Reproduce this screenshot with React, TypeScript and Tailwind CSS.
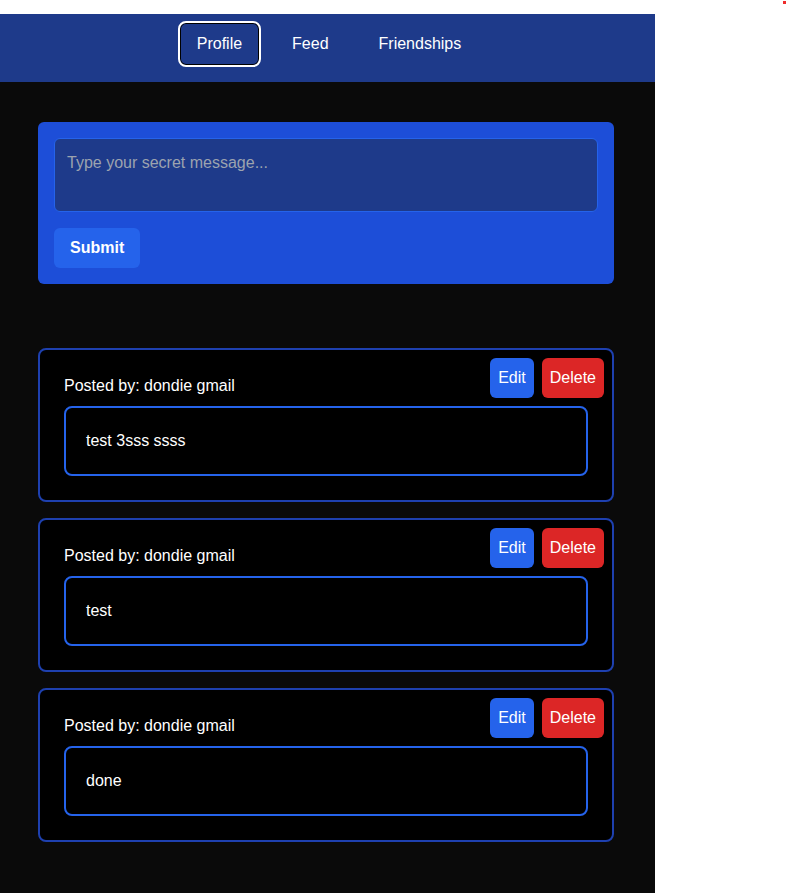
import React from "react";

const posts = [
  { id: 1, author: "dondie gmail", message: "test 3sss ssss" },
  { id: 2, author: "dondie gmail", message: "test" },
  { id: 3, author: "dondie gmail", message: "done" },
];

const tabs = [
  { label: "Profile", active: true },
  { label: "Feed", active: false },
  { label: "Friendships", active: false },
];

const App = () => {
  return (
    <div className="relative min-h-[893px] bg-white pt-[14px] font-['Liberation_Sans',Arial,sans-serif]">
      <span className="absolute left-[783px] top-[1px] h-[3px] w-[3px] bg-[#ef2b2b]" />

      <div className="w-[655px] min-h-[879px] bg-[#0a0a0a]">
        <nav className="flex h-[68px] items-start justify-center gap-3 bg-[#1e3a8a] pt-[7px] pl-[3px]">
          {tabs.map((tab) => (
            <button
              key={tab.label}
              className={`rounded-lg px-[17px] py-[9px] text-base leading-6 text-white border-2 ${
                tab.active
                  ? "border-white shadow-[inset_0_0_0_1px_#000]"
                  : "border-transparent"
              }`}
            >
              {tab.label}
            </button>
          ))}
        </nav>

        <main className="pl-[38px] pt-10 pb-[52px]">
          <form
            className="w-[576px] rounded-md bg-[#1d4ed8] p-4"
            onSubmit={(e) => e.preventDefault()}
          >
            <textarea
              placeholder="Type your secret message..."
              className="block h-[74px] w-full resize-none rounded-md border border-[#2563eb] bg-[#1e3a8a] p-3 text-base leading-6 text-white placeholder:text-[#9ca3af] outline-none"
            />
            <button
              type="submit"
              className="mt-4 rounded-md bg-[#2563eb] px-4 py-2 text-base font-bold leading-6 text-white"
            >
              Submit
            </button>
          </form>

          <div className="mt-16 flex w-[576px] flex-col gap-4">
            {posts.map((post) => (
              <div
                key={post.id}
                className="relative rounded-lg border-2 border-[#1e40af] bg-black p-6"
              >
                <div className="absolute right-2 top-2 flex gap-2">
                  <button className="rounded-md bg-[#2563eb] px-2 py-2 text-base leading-6 text-white">
                    Edit
                  </button>
                  <button className="rounded-md bg-[#dc2626] px-2 py-2 text-base leading-6 text-white">
                    Delete
                  </button>
                </div>
                <p className="mb-2 text-base leading-6 text-white">
                  Posted by: {post.author}
                </p>
                <div className="rounded-lg border-2 border-[#2563eb] px-5 py-[21px] text-base leading-6 text-white">
                  {post.message}
                </div>
              </div>
            ))}
          </div>
        </main>
      </div>
    </div>
  );
};

export default App;
